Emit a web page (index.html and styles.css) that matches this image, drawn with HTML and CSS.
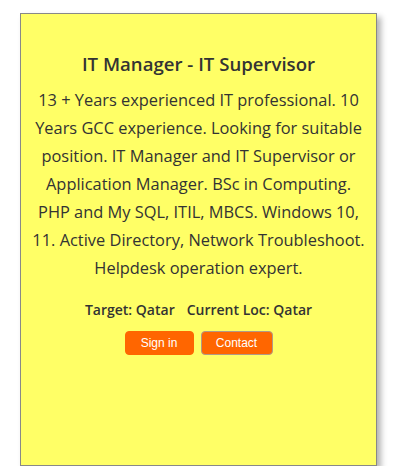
FILE: index.html
```html
<!doctype html>
<html lang="en">
    <head>
        <meta charset="UTF-8" />
        <meta name="viewport" content="width=device-width, initial-scale=1.0" />
        <title>IT Manager - IT Supervisor</title>
        <link rel="stylesheet" href="styles.css">
    </head>
    <body>
        <div class="card">
            <h1>IT Manager - IT Supervisor</h1>

            <p class="summary">
                13 + Years experienced IT professional. 10 Years GCC
                experience. Looking for suitable position. IT Manager and IT
                Supervisor or Application Manager. BSc in Computing. PHP and
                My SQL, ITIL, MBCS. Windows 10, 11. Active Directory, Network
                Troubleshoot. Helpdesk operation expert.
            </p>

            <div class="location">
                <span>Target: Qatar</span>
                <span>Current Loc: Qatar</span>
            </div>

            <div class="actions">
                <button type="button" class="btn">Sign in</button>
                <button type="button" class="btn btn-outline">Contact</button>
            </div>
        </div>
    </body>
</html>
```

FILE: styles.css
```css
body {
    margin: 0;
    padding: 13px 0 0 20px;
    background-color: white;
    font-family: "Open Sans", sans-serif;
    color: #333;
}
.card {
    box-sizing: border-box;
    width: 357px;
    height: 453px;
    padding: 37px 9px 0;
    background-color: #ffff66;
    border: 1px solid #888;
    box-shadow: 4px 4px 6px rgba(0, 0, 0, 0.3);
    text-align: center;
}
h1 {
    margin: 0 0 9px;
    font-size: 18.6px;
    font-weight: 600;
    line-height: 26px;
}
.summary {
    margin: 0 0 18px;
    font-size: 16.4px;
    line-height: 28px;
}
.location {
    display: flex;
    justify-content: center;
    gap: 12px;
    font-size: 14px;
    font-weight: 600;
    line-height: 20px;
}
.actions {
    display: flex;
    justify-content: center;
    gap: 7px;
    margin-top: 11px;
}
.btn {
    width: 69px;
    height: 24px;
    padding: 0;
    background-color: #ff6600;
    color: white;
    border: 1px solid #ff6600;
    border-radius: 4px;
    font-family: "Liberation Sans", Arial, sans-serif;
    font-size: 12px;
}
.btn-outline {
    width: 72px;
    border-color: #b09a88;
}
```
